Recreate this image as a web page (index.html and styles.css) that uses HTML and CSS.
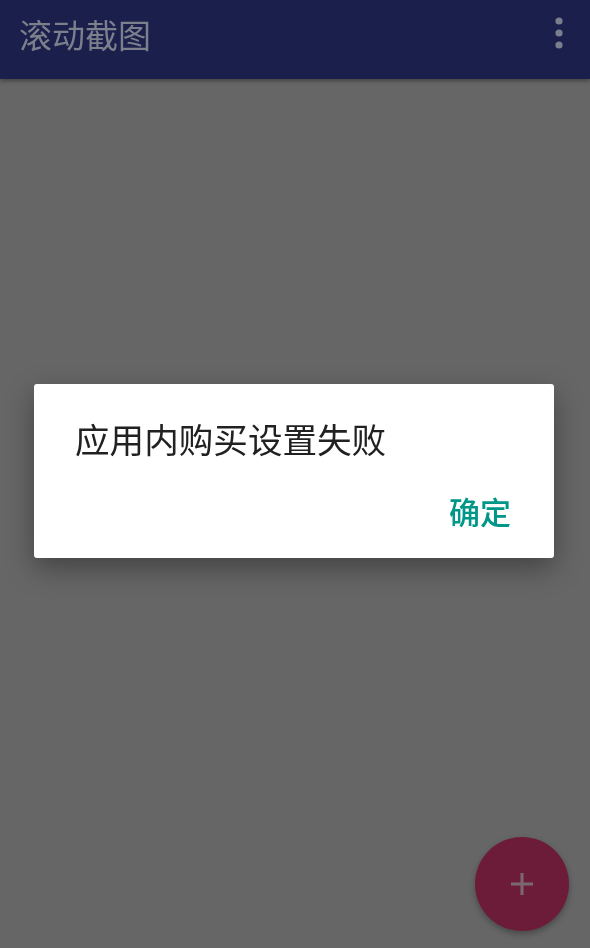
FILE: index.html
```html
<!DOCTYPE html>
<html lang="zh-CN">
    <head>
        <meta charset="UTF-8">
        <title>滚动截图</title>
        <link rel="stylesheet" href="styles.css">
    </head>
    <body>
        <div class="page">
            <div class="appbar">
                <div class="title">滚动截图</div>
                <div class="more">
                    <svg width="12" height="34" viewBox="0 0 12 34">
                        <circle cx="6" cy="5" r="3.6" fill="#7b7e8e"/>
                        <circle cx="6" cy="17" r="3.6" fill="#7b7e8e"/>
                        <circle cx="6" cy="29" r="3.6" fill="#7b7e8e"/>
                    </svg>
                </div>
            </div>
            <div class="content"></div>
            <div class="fab">
                <svg width="26" height="26" viewBox="0 0 26 26">
                    <path d="M13 2v22M2 13h22" stroke="#7a6a70" stroke-width="3"/>
                </svg>
            </div>
        </div>
        <div class="mask">
            <div class="dialog">
                <div class="msg">应用内购买设置失败</div>
                <div class="actions">
                    <div class="btn">确定</div>
                </div>
            </div>
        </div>
    </body>
</html>
```
FILE: styles.css
```css
html, body {
    margin: 0;
    padding: 0;
}
body {
    width: 590px;
    height: 948px;
    overflow: hidden;
    font-family: "Noto Sans CJK SC", "Noto Sans", sans-serif;
    background: #666666;
}
.page {
    height: 948px;
    display: flex;
    flex-direction: column;
}
.appbar {
    height: 79px;
    background: #1a1f4b;
    display: flex;
    align-items: center;
    justify-content: space-between;
    padding: 0 25px 0 19px;
    box-shadow: 0 2px 4px rgba(0, 0, 0, 0.35);
    position: relative;
    z-index: 1;
}
.title {
    font-size: 33px;
    color: #7c7f8c;
    margin-top: -12px;
}
.more {
    display: flex;
    margin-top: -13px;
}
.content {
    flex: 1;
    background: #666666;
}
.fab {
    position: absolute;
    left: 475px;
    top: 837px;
    width: 94px;
    height: 94px;
    border-radius: 50%;
    background: #6c1b39;
    display: flex;
    align-items: center;
    justify-content: center;
    box-shadow: 0 3px 6px rgba(0, 0, 0, 0.3);
}
.mask {
    position: fixed;
    left: 0;
    top: 0;
    width: 590px;
    height: 948px;
    display: flex;
    align-items: flex-start;
}
.dialog {
    margin: 384px 0 0 34px;
    width: 520px;
    height: 174px;
    box-sizing: border-box;
    background: #ffffff;
    border-radius: 3px;
    box-shadow: 0 10px 28px rgba(0, 0, 0, 0.35);
    padding: 30px 43px 0 41px;
}
.msg {
    font-size: 34.6px;
    line-height: 48px;
    color: #212121;
}
.actions {
    display: flex;
    justify-content: flex-end;
    margin-top: 27px;
}
.btn {
    font-size: 31px;
    line-height: 44px;
    color: #009688;
    font-weight: 500;
}
```
